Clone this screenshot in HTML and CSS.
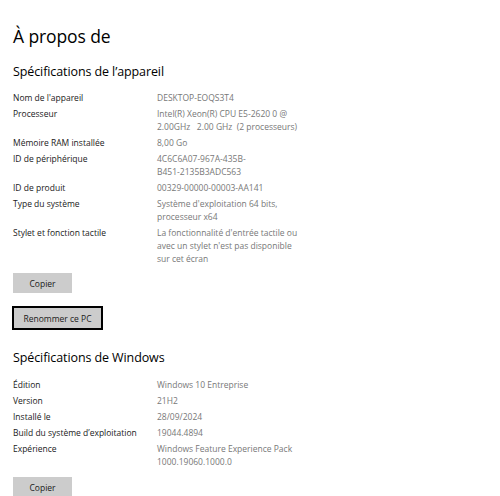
FILE: index.html
```html
<!DOCTYPE html>
<html lang="fr">
<head>
<meta charset="utf-8">
<link rel="stylesheet" href="styles.css">
</head>
<body>
<main class="page">
  <h1 class="title">À propos de</h1>

  <h2 class="section-title">Spécifications de l’appareil</h2>
  <dl class="specs">
    <dt>Nom de l'appareil</dt><dd>DESKTOP-EOQS3T4</dd>
    <dt>Processeur</dt><dd>Intel(R) Xeon(R) CPU E5-2620 0 @<br><span class="pre">2.00GHz   2.00 GHz  (2 processeurs)</span></dd>
    <dt>Mémoire RAM installée</dt><dd>8,00 Go</dd>
    <dt>ID de périphérique</dt><dd>4C6C6A07-967A-435B-<br>B451-2135B3ADC563</dd>
    <dt>ID de produit</dt><dd>00329-00000-00003-AA141</dd>
    <dt>Type du système</dt><dd>Système d'exploitation 64 bits,<br>processeur x64</dd>
    <dt>Stylet et fonction tactile</dt><dd>La fonctionnalité d'entrée tactile ou<br>avec un stylet n'est pas disponible<br>sur cet écran</dd>
  </dl>
  <button class="btn btn-copy" type="button">Copier</button>
  <button class="btn btn-rename" type="button">Renommer ce PC</button>

  <h2 class="section-title section-windows">Spécifications de Windows</h2>
  <dl class="specs">
    <dt>Édition</dt><dd>Windows 10 Entreprise</dd>
    <dt>Version</dt><dd>21H2</dd>
    <dt>Installé le</dt><dd>28/09/2024</dd>
    <dt>Build du système d’exploitation</dt><dd>19044.4894</dd>
    <dt>Expérience</dt><dd>Windows Feature Experience Pack<br>1000.19060.1000.0</dd>
  </dl>
  <button class="btn btn-copy btn-last" type="button">Copier</button>
</main>
</body>
</html>
```

FILE: styles.css
```css
html, body {
  margin: 0;
  padding: 0;
  background: #ffffff;
}

body {
  width: 500px;
  height: 496px;
  overflow: hidden;
  font-family: "Open Sans", "Noto Sans", "Liberation Sans", sans-serif;
  color: #000000;
}

.page {
  display: flex;
  flex-direction: column;
  align-items: flex-start;
  padding: 25px 0 0 13px;
}

.title {
  margin: 0;
  font-size: 17.5px;
  font-weight: 400;
  line-height: 22px;
  letter-spacing: -0.1px;
}

.section-title {
  margin: 16px 0 0 0;
  font-size: 12.5px;
  font-weight: 400;
  line-height: 18px;
  letter-spacing: -0.1px;
}

.section-windows {
  margin-top: 19px;
}

.specs {
  display: grid;
  grid-template-columns: 144px auto;
  row-gap: 3px;
  margin: 10px 0 0 0;
  font-size: 8.5px;
  line-height: 13px;
}

.section-windows + .specs {
  margin-top: 11px;
}

.specs dt {
  color: #1a1a1a;
}

.specs dd {
  margin: 0;
  color: #787878;
}

.pre {
  white-space: pre;
}

.btn {
  font-family: inherit;
  font-size: 8.5px;
  color: #1a1a1a;
  background: #cccccc;
  border: 0;
  padding: 0;
  margin: 0;
}

.btn-copy {
  width: 59px;
  height: 20px;
  margin-top: 8px;
}

.btn-last {
  margin-top: 9px;
}

.btn-rename {
  width: 91px;
  height: 24px;
  margin-top: 13px;
  margin-left: -1px;
  border: 2px solid #000000;
}
```
